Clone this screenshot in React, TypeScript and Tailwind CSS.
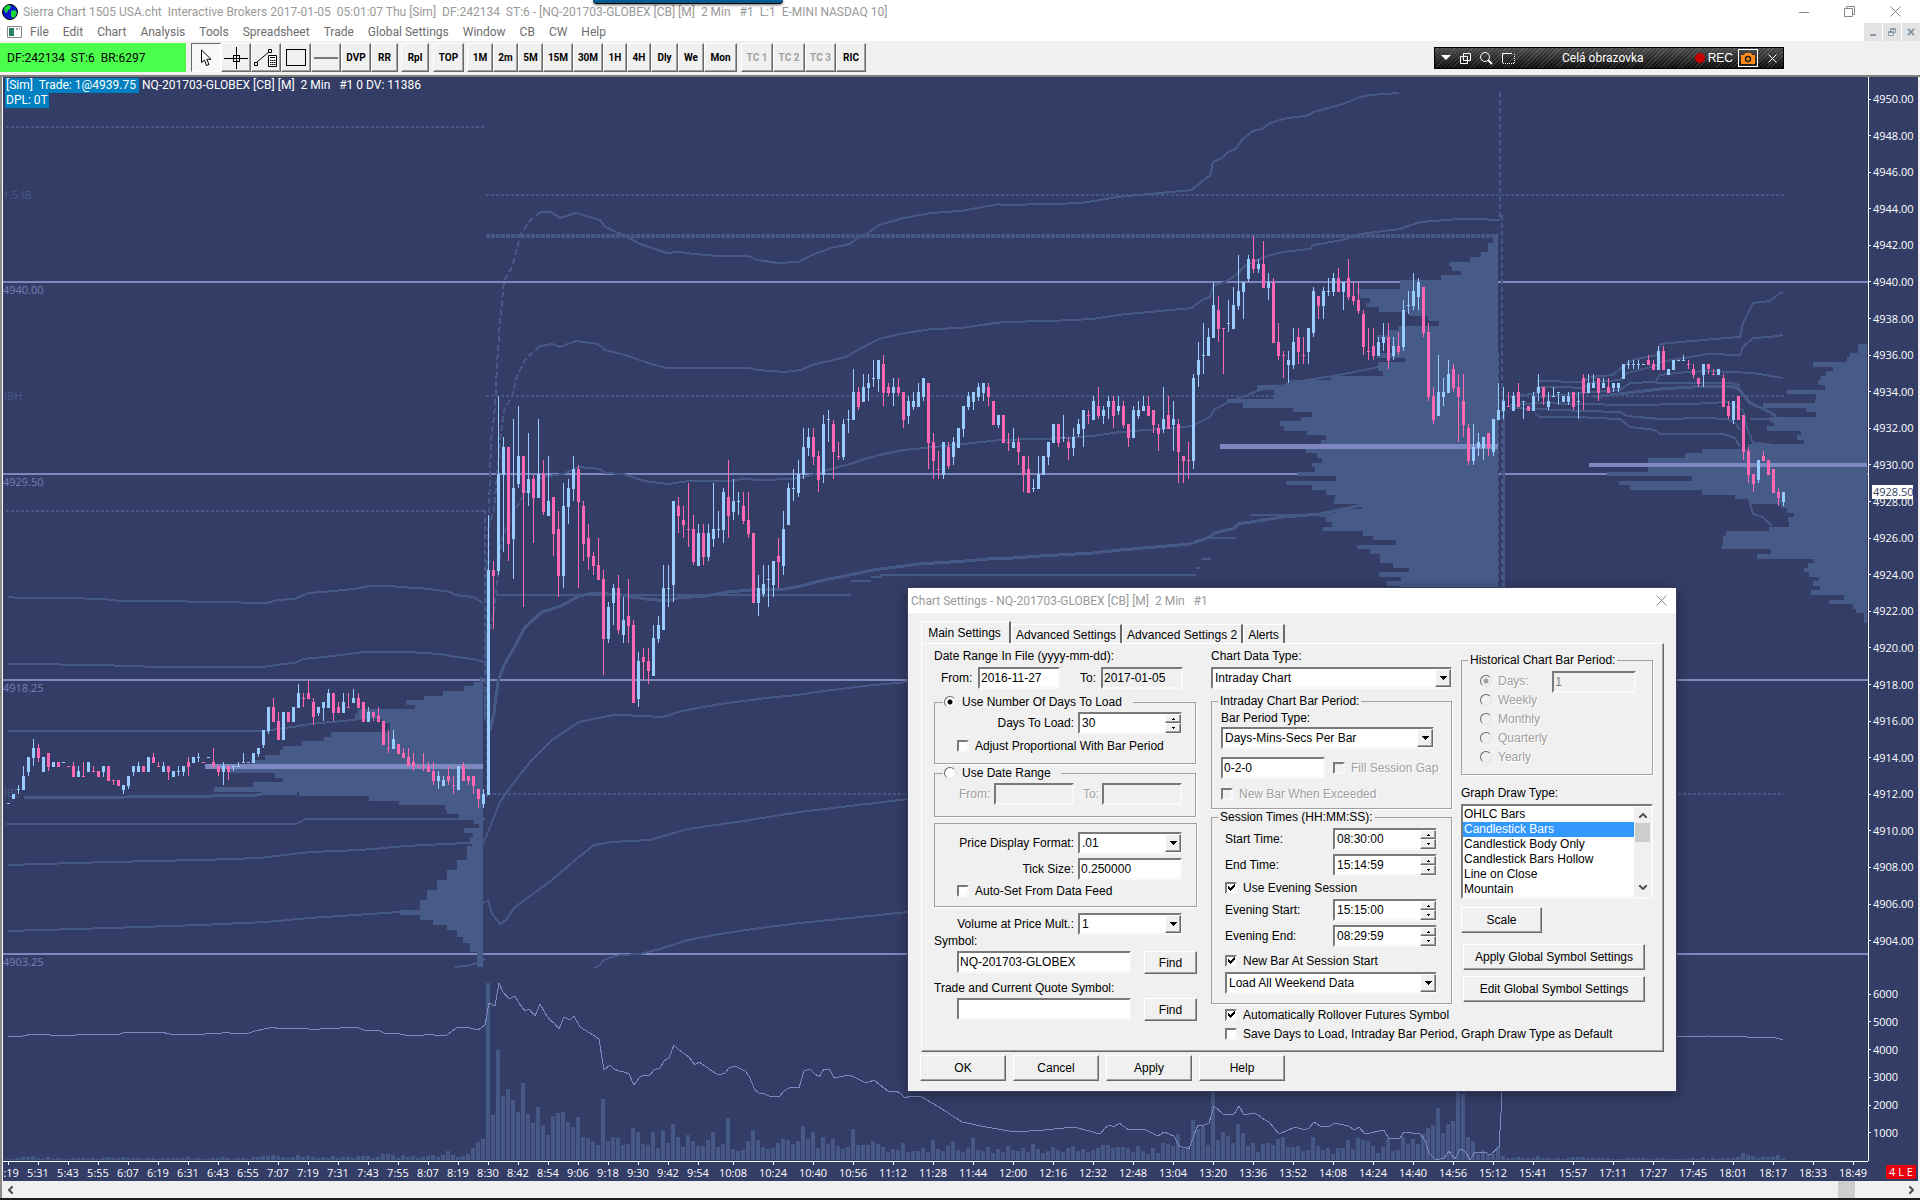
import React, { useId } from "react";

/* ---------- chart data ---------- */

// Every block keeps its own origin and zoom (units per pixel)
interface Frame {
  x: number;
  y: number;
  kx: number;
  ky: number;
}

const PAGE: Frame = { x: 0, y: 0, kx: 1, ky: 1 };
const PRE: Frame = { x: 0, y: 400, kx: 3, ky: 3 };
const OPEN: Frame = { x: 460, y: 200, kx: 2.6133, ky: 2.9037 };
const MID: Frame = { x: 1000, y: 80, kx: 3, ky: 3 };
const EVE: Frame = { x: 1460, y: 200, kx: 3, ky: 3 };
const VOL: Frame = { x: 0, y: 940, kx: 1.7043, ky: 3 };
const VOL2: Frame = { x: 1100, y: 1060, kx: 1.9122, ky: 3 };

// direction high top bottom low, trailing values may be left out
const CANDLES: { frame: Frame; start: number; rows: string }[] = [
  {
    frame: PRE,
    start: 0,
    rows: "u 1209,u 1182 1182 1197,u 1155 1167 1170 1182,u 1098 1128 1170,u 1071 1071 1116 1128,u 1017 1044 1074 1098,d 1032 1044 1074 1086,u 1071 1071 1116,d 1059 1059 1101 1113,u 1086 1086 1101,d 1086 1086 1101,u 1086,d 1098,d 1086 1098 1131,u 1098 1113 1131,d 1086 1128 1131,u 1086 1086 1116,d 1098 1113 1116,d 1113 1113 1131,u 1098 1098 1116 1131,d 1098 1098 1143,d 1140 1140 1143 1155,d 1140 1140 1158,u 1155 1155 1170 1182,u 1128 1128 1158 1167,u 1098 1098 1116 1128,u 1086 1098 1116,d 1098 1098 1116,u 1071 1071 1116,d 1059 1071 1089,d 1086 1098 1101,u 1086 1098 1116,d 1098 1098 1116 1140,u 1113 1113 1131,u 1098 1113 1116 1128,u 1098 1098 1116 1128,d 1071 1086 1101 1128,u 1071 1071 1089,u 1059 1071 1074 1086,d 1086,u 1071,d 1044 1086 1101,d 1098 1098 1116 1128,u 1086 1098 1116 1155,d 1098 1098 1116 1140,u 1098 1098 1101 1113,u 1086 1098 1101,u 1059 1086 1089,u 1086,u 1059 1059 1089,u 1044 1044 1062 1071,u 990 990 1035 1044,u 921 921 993 1002,d 894 921 966,d 936 963 1020,u 936 936 1020,d 936 936 966,u 921 921 966,u 852 879 924,d 879 894 897 921,d 840 879 897,d 894 906 951 975,u 921 921 939 948,u 906 906 924 963,u 867 879 924,d 879 879 939 963,d 906 921 939,u 879 906 939,d 879 921 924,u 867 894 909,d 879 894 924,d 906 906 966,u 921 936 966,d 936 936 951 963,d 921 948 966,d 963 963 1035,d 990 1044 1047 1059,u 990 1017 1047,d 1032 1032 1062,d 1044 1059 1074,d 1044 1071 1098,d 1059 1086 1101 1113,d 1098 1098 1101 1104,d 1059 1098 1101 1113,d 1086 1098 1116,d 1086 1113 1143 1155,u 1113 1128 1143 1167,u 1128 1140 1158,d 1098 1128 1143 1155,d 1128 1155 1158 1182,u 1098 1098 1170,d 1086 1098 1143,d 1128 1128 1143 1155,d 1128 1128 1158 1182,d 1167 1167 1197 1224,u 1167 1182 1212 1224",
  },
  {
    frame: OPEN,
    start: 96,
    rows: "u 914 1074 1728,d 1048 1074 1092 1246,u 569 795 1076 1088,u 688 717 798 1021,d 717 717 998 1048,u 636 836 984 1101,u 598 743 825 836,d 743 743 851 1182,u 677 810 851 888,d 798 810 865 996,u 636 795 865,d 755 795 906 914,u 743 874 917,d 862 862 970 1034,d 903 955 1092 1153,u 822 888 1092 1127,u 810 836 891 941,u 743 781 839 874,d 769 781 877 1127,d 874 888 998 1048,d 941 981 1037 1074,d 1022 1034 1063 1088,d 981 1060 1103,d 1074 1101 1275 1379,u 1166 1182 1275 1287,u 1115 1127 1170 1234,d 1088 1127 1249 1260,u 1153 1220 1263 1286,d 1101 1208 1237 1286,d 1220 1234 1461,u 1312 1339 1449 1472,d 1301 1327 1342 1393,d 1301 1339 1368 1405,u 1234 1272 1382,u 1208 1234 1275 1286,u 1060 1127 1249,u 1060 1127 1130 1182,u 874 874 1118 1167,d 862 888 918 967,d 888 929 944 981,d 822 955 958 1008,d 914 955 1051 1060,u 941 967 1063,d 941 967 1037 1060,u 941 967 1037 1048,u 822 955 984 1008,u 903 955 958 981,u 836 848 958 996,d 755 862 918 981,u 810 874 906 929,u 848 874 877 914,d 848 888 932 941,d 848 929 970 981,d 967 967 1170,u 1088 1127 1170 1208,u 1060 1115 1144 1153,u 1060 1101 1104 1182,u 1048 1048 1118 1153,d 981 1034 1051 1127,u 903 955 1063 1088,u 822 836 944,u 781 836 839 874,u 755 795 851 862,u 662 717 798 810,u 662 688 720 743,d 662 688 746 769,d 729 743 812 848,u 624 650 798 822,u 610 636 639 703,d 638 650 732 810,d 703 743 746 755,u 636 650 746 755,u 610 636 639 677,u 491 558 639,d 543 558 601 610,u 505 543 586,u 505 531 546 584,u 465 517 520 543,u 465 465 520 558,d 450 476 560 598,d 531 543 560 569,u 517 543 560 598,d 517 543 560 569,d 558 558 639 662,u 569 584 627 650,u 558 584 601 610,u 531 558 601,u 517 517 572 584,d 531 531 706 781,d 677 703 758 810,d 729 781 784 810,u 703 703 799 810,d 703 717 772 781,u 688 703 746 769,u 662 662 720,u 598 598 665 688,u 558 569 601 610,u 558 558 586 610,u 531 543 572 584,u 531 531 560 584,d 531 543 572 598,d 584 584 653,u 624 624 653 662",
  },
  {
    frame: MID,
    start: 199,
    rows: "d 1005 1005 1089,d 1059 1086 1089 1113,u 1044 1086 1104,d 1071 1086 1116 1155,d 1128 1128 1185 1236,d 1128 1167 1239,u 1197 1224 1227 1236,u 1128 1182 1227,u 1128 1128 1185,u 1086 1086 1131 1155,u 1032 1032 1089,d 1032 1032 1089 1101,u 1005 1071 1074 1086,d 1071 1086 1104 1140,u 1044 1071 1104 1128,u 1017 1032 1062 1071,u 990 990 1047 1101,d 990 1005 1008 1032,u 948 963 1020,d 921 978 1008 1017,u 978 990 1008 1032,u 948 963 981 1017,d 948 963 1008 1044,u 948 978 993 1005,d 963 978 1035 1044,d 1032 1032 1074 1101,u 978 990 1074,u 963 990 1008 1017,u 948 978 993,d 948 978 1008,d 990 990 1035 1059,d 1032 1044 1062 1113,u 921 1017 1047 1059,d 948 1005 1047,u 963 1017 1035 1113,d 1017 1032 1116 1209,d 1128 1128 1143 1209,d 1086 1140 1143 1197,u 882 894 1143 1167,u 786 840 885 921,u 729 825 828 882,u 744 771 828,u 606 675 774,d 648 690 747 786,d 744 744 747 882,u 660 729 732 756,u 621 675 747,u 525 633 678 690,u 606 606 636 717,u 525 537 597 606,d 468 537 567 579,u 537 552 567 579,d 483 552 624,u 579 606 624 660,d 594 606 789,d 729 786 828 840,d 813 825 828 894,u 813 840 855 909,u 744 786 855 867,d 744 771 816 852,d 771 825 828 852,u 744 744 816 852,u 621 633 759 771,d 648 648 678 717,u 621 633 678 717,u 594 633 636 648,u 579 594 636 648,d 564 594 636,u 606 606 636 690,d 537 594 651 660,d 606 648 663 675,d 606 660 693 702,d 690 702 801 825,d 744 813 816 840,d 744 798 828 840,u 771 786 828,u 729 771 789 813,d 729 771 843 867,u 771 798 828 840,d 756 798 816 825,u 660 690 801 813,u 633 675 678 702,u 579 633 678 690,u 594 606 651 690,d 621 621 759 771,d 729 756 951 963,d 921 948 1020 1032,u 825 936 1008,u 894 936 951 978,u 840 882 939,d 852 867 924 936,d 882 921 951 1086,d 882 963 1035 1071,d 1032 1044 1143 1155,u 1032 1101 1143 1155,u 1059 1086 1104 1128,u 1071 1071 1104 1140,d 1059 1059 1104 1128,u 1017 1017 1116 1128,u 909 990 1020,u 921 963 993 1017",
  },
  {
    frame: EVE,
    start: 300,
    rows: "d 576 618 621,u 576 588 633,d 549 576 621,u 603 603 606 657,d 618 618 633,u 576 588 633,u 522 561 579 603,d 561 561 591 615,u 576 603 621 630,u 561 588 591,u 576 576 579 615,u 588 588 606,u 576 588 606 615,d 576 576 621 630,u 576 603 606 657,d 522 534 579 630,u 522 549 579,u 522 549 564,d 534 534 579 603,u 534 549 564,d 534 561 579,u 549 549 564 576,u 549 549 564 576,u 492 492 537,u 480 492 495 507,u 480 492 495 507,u 480 492 495 507,u 492,d 465 480 495,d 480 492 510,u 438 453 510,d 438 453 510,u 507 507 525,u 480 480 510,u 480,u 465 480 483,d 480 492 495 507,d 492 507 525 534,d 534 534 552 561,u 492 492 525 561,d 492 492 507 522,d 507 522 525,u 507 507 525,d 522 534 621,d 603 618 648 657,u 603 603 660 672,d 588 588 660,d 645 645 756 780,d 741 753 825 849,d 822 822 852 876,u 780 780 840 849,d 753 768 783,d 780 780 825,d 807 807 879,d 864 876 894 918,u 876 876 906 918",
  },
];

// y:left steps, last value closes the shape
const PROFILES: { frame: Frame; right: number; steps: string; end: number }[] = [
  {
    frame: PRE,
    right: 1449,
    end: 1700,
    steps: "831:1440 846:1422 858:1392 873:1329 887:1272 900:1218 914:1245 927:1074 942:1066 955:1145 968:1169 996:993 1011:972 1023:906 1038:848 1050:840 1065:795 1079:753 1092:720 1106:690 1119:825 1134:848 1147:759 1161:642 1176:897 1188:1107 1203:1197 1215:1335 1230:1341 1242:1377 1255:1422 1271:1437 1284:1392 1299:1419 1312:1410 1326:1416 1338:1400 1380:1370 1410:1340 1440:1310 1470:1280 1500:1260 1530:1200 1545:1260 1560:1300 1575:1340 1590:1370 1610:1390 1630:1410 1655:1430",
  },
  {
    frame: MID,
    right: 1494,
    end: 1530,
    steps: "462:1485 475:1478 489:1464 516:1443 531:1410 546:1347 558:1356 573:1383 585:1323 600:1200 627:1071 642:1080 654:1110 669:1098 682:1137 695:1227 709:1284 723:1317 738:1194 751:1160 765:1131 778:1172 804:1185 819:1131 834:1215 846:1134 874:1149 888:993 900:866 914:771 930:822 957:681 970:729 984:879 996:936 1011:903 1023:840 1038:852 1053:921 1065:978 1080:963 1106:918 1119:951 1134:966 1149:936 1161:945 1175:891 1188:1008 1203:858 1215:936 1230:978 1245:1005 1257:1002 1272:1086 1287:1010 1299:957 1311:978 1326:996 1340:969 1353:1089 1368:1119 1380:1188 1395:1071 1407:1110 1422:1140 1449:1179 1464:1227 1476:1137 1491:1203 1503:1161 1518:1200",
  },
  {
    frame: EVE,
    right: 1221,
    end: 1269,
    steps: "432:1194 459:1170 471:1161 486:1059 500:1119 513:1098 528:1083 540:1074 555:1095 570:981 582:1068 597:1065 609:909 624:1038 636:1068 651:930 665:942 678:921 692:1023 706:1011 719:1032 732:864 747:726 759:675 774:564 816:441 828:696 843:477 855:510 870:726 885:825 897:867 911:963 925:981 938:1002 951:984 966:987 981:927 993:798 1008:789 1035:786 1047:933 1062:891 1077:1062 1089:1044 1104:1032 1116:1047 1131:1077 1144:1059 1158:1080 1171:1053 1185:1152 1200:1107 1212:1179 1227:1188 1240:1212",
  },
];

const BANDS: { frame: Frame; w?: number; dash?: boolean; pts: string }[] = [
  { frame: PRE, pts: "25,591 60,594 200,595 310,598 360,603 490,604 640,607 800,609 830,600 885,597 925,580 1000,572 1060,566 1110,558 1165,558 1290,567 1350,577 1365,584 1420,592 1450,609" },
  { frame: PRE, pts: "25,793 340,795 345,798 520,800 790,801 850,791 885,788 910,777 975,772 1095,756 1220,757 1320,762 1370,770 1420,776 1455,787" },
  { frame: PRE, pts: "25,993 800,993 830,987 880,981 930,972 1060,960 1090,955 1145,955" },
  { frame: PRE, w: 3, pts: "72,1195 380,1190 640,1187 770,1184 800,1180 890,1178" },
  { frame: PRE, pts: "18,1272 888,1272 918,1257 1456,1257" },
  { frame: PAGE, pts: "8,865 110,862 200,860 260,858 310,852 360,850 384,848 405,846 466,843 484,842 500,802 512,785 530,762 552,740" },
  { frame: PAGE, pts: "8,931 110,928 200,925 266,922 310,918 370,914 430,910 470,906 486,902" },
  { frame: PAGE, pts: "455,967 466,966 478,963 485,959" },
  { frame: PAGE, pts: "488,900 492,914 500,924 506,920 514,908 530,896 552,880 575,860 594,845 612,842 650,840 688,829 750,820 800,812 850,806 908,799" },
  { frame: PAGE, pts: "594,968 600,965 604,960 612,957 620,955 640,954 660,949 688,940 720,934 760,928 800,923 850,918 908,912" },
  { frame: OPEN, dash: true, pts: "66,1510 70,1160 74,1000 80,700 92,600 97,480 104,350 115,235 135,195 160,100 178,68 208,35" },
  { frame: OPEN, pts: "208,35 238,35 262,52 303,38 365,57 378,78 430,105 470,128 540,153 575,150 610,158 680,163 755,163 775,175 830,184 885,180 920,160 970,140 1020,128 1035,112 1065,97 1095,72 1160,52 1230,37 1310,31 1380,18 1411,13" },
  { frame: OPEN, dash: true, pts: "70,1400 76,950 90,900 105,700 115,610 135,570 150,510 170,465 208,425" },
  { frame: OPEN, pts: "208,425 240,417 262,428 303,408 360,418 378,435 430,450 500,475 540,488 755,487 775,494 850,500 890,494 920,478 1010,455 1030,440 1095,405 1150,388 1230,376 1310,371 1400,357 1411,356" },
  { frame: OPEN, dash: true, pts: "78,1250 88,1200 100,1080 110,980 130,930 150,890 170,850 200,810" },
  { frame: OPEN, pts: "200,810 230,800 270,797 310,775 365,780 378,793 425,797 480,815 540,824 600,817 700,816 740,810 790,813 870,811 910,800 960,783 1020,768 1050,756 1095,740 1160,727 1290,712 1411,697" },
  { frame: OPEN, w: 3, pts: "78,1540 90,1490 100,1400 115,1350 140,1300 170,1240 213,1197 265,1180 310,1150 350,1140 420,1146 485,1158 540,1163 570,1155 640,1149 700,1137 760,1133 850,1130 890,1122 950,1102 1020,1090 1080,1074 1200,1057 1320,1049 1411,1039" },
  { frame: OPEN, pts: "95,1146 1022,1146" },
  { frame: OPEN, pts: "1022,1106 1074,1106" },
  { frame: OPEN, pts: "1074,1095 1100,1095 1100,1088 1411,1088" },
  { frame: OPEN, pts: "240,1568 310,1515 400,1496 420,1495 530,1500 580,1485 680,1463 800,1447 880,1438 950,1425 1080,1408 1170,1399" },
  { frame: MID, pts: "0,375 160,373 240,368 300,361 350,350 480,338 575,329 610,300 630,288 640,245 665,235 685,215 705,207 730,178 760,152 785,147 810,130 850,118 930,106 940,95 1020,75 1080,50 1110,44 1196,38" },
  { frame: MID, pts: "0,726 150,723 280,716 350,704 480,692 575,683 605,660 630,650 640,618 680,602 710,582 735,557 760,545 800,528 850,515 930,506 940,495 1030,480 1080,462 1200,446 1260,425 1380,416 1430,417 1500,421" },
  { frame: MID, pts: "0,1080 120,1077 200,1075 280,1067 360,1056 480,1046 575,1038 630,1011 645,988 680,970 740,945 780,930 830,920 880,906 980,890 1080,872 1135,862" },
  { frame: MID, w: 3, pts: "0,1436 120,1427 280,1418 360,1409 570,1392 630,1370 645,1358 705,1345 715,1332 770,1324 850,1312 960,1303 1030,1288 1085,1276" },
  { frame: MID, pts: "0,1485 588,1485" },
  { frame: MID, pts: "588,1464 603,1464" },
  { frame: MID, pts: "603,1437 633,1437" },
  { frame: MID, pts: "633,1374 708,1374" },
  { frame: MID, pts: "753,1305 1000,1305" },
  { frame: EVE, pts: "150,590 230,580 235,543 370,546 390,530 460,525 485,500 520,480 590,465 600,432 660,426 800,415 840,410 850,370 880,310 930,303 960,280 970,279" },
  { frame: EVE, pts: "225,590 240,560 300,560 370,563 400,545 480,540 500,520 585,498 600,485 690,470 745,462 840,465 850,440 880,415 930,412 970,405" },
  { frame: EVE, pts: "240,590 370,578 480,570 510,550 585,545 600,525 680,517 750,512 880,520 970,534" },
  { frame: EVE, pts: "588,549 810,549 840,555" },
  { frame: EVE, w: 3, pts: "400,590 500,578 600,568 700,562 800,558 835,565 870,610 930,635 950,650" },
  { frame: EVE, pts: "150,615 240,609 500,614 700,612 800,605 850,630 860,680 880,728 930,731" },
  { frame: EVE, pts: "150,625 370,632 480,636 500,648 600,658 740,655 800,657 825,670 840,690" },
  { frame: EVE, pts: "225,640 240,650 370,650 400,655 480,657 510,682 585,690 600,703 790,703 825,714 840,740" },
  { frame: EVE, pts: "867,897 880,943 910,950 935,978" },
  { frame: EVE, pts: "870,657 940,657" },
];

const VOLUME_LINES: { frame: Frame; pts: string }[] = [
  { frame: VOL, pts: "14,289 30,292 40,289 55,283 75,283 85,286 130,286 140,283 150,286 158,283 165,286 180,283 205,283 215,277 275,277 290,283 350,283 360,280 375,283 382,277 392,280 425,280 435,274 450,268 467,262 476,268 485,265 493,268 507,265 520,265 527,268 545,268 560,265 570,268 580,265 595,262 607,262 620,271 645,271 655,280 665,283 673,280 690,286 722,286 732,283 740,286 762,286 778,265 787,262 795,262 815,271 826,256 834,190 843,199 851,130 858,155 868,178 877,169 885,190 894,212 902,208 911,227 920,193 928,220 937,240 944,248 953,268 962,230 971,241 979,227 988,260 1005,280 1021,297 1030,391 1039,376 1047,388 1055,394 1064,397 1072,403 1081,436 1090,412 1098,406 1106,409 1115,391 1124,385 1132,362 1141,355 1149,314 1158,330 1175,350 1184,374 1192,367 1218,400 1226,406 1235,400 1243,385 1252,379 1260,385 1269,394 1277,409 1286,451 1294,460 1303,463 1311,469 1320,469 1328,472 1337,454 1345,445 1354,442 1362,445 1371,394 1380,388 1388,400 1396,412 1405,388 1414,391 1422,415 1439,409 1447,406 1456,412 1472,427 1481,427 1489,421 1500,436 1506,445 1514,454 1525,454 1534,460 1542,475 1551,469 1568,467 1600,500 1640,545 1680,560 1730,575 1780,570 1830,560 1874,582" },
  { frame: VOL2, pts: "0,222 10,204 20,195 27,201 36,189 55,210 85,208 110,227 123,217 142,228 152,258 170,267 180,225 188,196 196,199 208,190 218,139 235,163 257,163 266,139 275,166 294,160 303,165 315,180 324,185 342,222 373,202 392,210 400,204 409,187 421,199 440,197 449,190 475,199 487,210 495,201 506,222 543,210 553,237 573,235 582,217 612,222 621,240 630,279 640,298 650,298 658,294 668,274 679,297 688,268 698,273 707,300 717,277 737,277 745,286 763,260 767,160 769,60" },
  { frame: EVE, pts: "648,2511 740,2508 860,2511 940,2511 970,2520" },
];

const VOLUME =
  "1 1 2 3 3 4 2 1 3 1 2 1 1 2 2 2 1 2 1 2 3 2 2 3 2 2 2 1 2 2 1 2 2 2 2 2 3 1 2 1 1 2 2 3 2 1 2 2 1 3 3 4 4 5 4 3 2 3 5 3 4 3 2 3 2 4 2 3 3 2 4 4 4 2 3 6 6 5 2 5 3 4 2 3 4 5 3 5 9 5 3 4 6 12 18 21 " +
  "177 45 110 64 71 60 48 77 46 37 53 35 25 44 47 48 38 33 43 23 22 19 15 61 19 23 22 15 16 32 28 16 15 28 12 30 17 36 23 13 25 19 14 14 20 28 13 16 42 11 9 10 19 30 20 13 11 12 17 21 20 16 19 34 21 28 12 23 16 21 14 11 13 31 15 15 15 19 16 13 8 11 10 17 8 9 " +
  "9 12 8 20 11 9 14 18 10 8 12 22 10 9 13 7 11 8 14 10 9 12 8 16 11 7 9 13 10 8 12 14 9 11 8 10 12 15 15 12 13 13 12 8 14 9 6 12 7 17 16 14 26 11 14 40 31 34 15 72 20 28 24 17 36 27 14 17 8 16 17 15 21 23 13 13 14 9 10 23 14 10 12 6 12 12 20 11 22 20 19 14 7 13 21 9 10 23 16 21 16 26 32 35 52 27 36 39 70 66 23 19 6 10 6 6 14 " +
  "4 2 2 3 2 2 2 4 2 2 1 2 1 2 3 3 3 2 2 2 2 2 1 1 1 2 2 2 2 1 1 2 2 1 1 1 1 1 2 1 3 1 2 1 2 2 2 3 7 5 4 2 3 3 3 5 2";

const TIMES_A = "5:19 5:31 5:43 5:55 6:07 6:19 6:31 6:43 6:55 7:07 7:19 7:31 7:43 7:55 8:07 8:19 8:30 8:42 8:54 9:06 9:18 9:30 9:42 9:54".split(" ");
const TIMES_B = "10:08 10:24 10:40 10:56 11:12 11:28 11:44 12:00 12:16 12:32 12:48 13:04 13:20 13:36 13:52 14:08 14:24 14:40 14:56 15:12 15:41 15:57 17:11 17:27 17:45 18:01 18:17 18:33 18:49".split(" ");
const PRICES = Array.from({ length: 24 }, (_, i) => (4950 - i * 2).toFixed(2));

const LEVELS = [
  { y: 281, label: "4940.00" },
  { y: 473, label: "4929.50" },
  { y: 679, label: "4918.25" },
  { y: 953, label: "4903.25" },
];

const barX = (i: number) => 8 + i * 5;

function toPoints(f: Frame, pts: string) {
  return pts
    .split(" ")
    .map((p) => {
      const [x, y] = p.split(",").map(Number);
      return `${Math.round(f.x + x / f.kx)},${Math.round(f.y + y / f.ky)}`;
    })
    .join(" ");
}

function Candles() {
  return (
    <g>
      {CANDLES.map(({ frame, start, rows }) =>
        rows.split(",").map((row, n) => {
          const [dir, ...raw] = row.split(" ");
          const v = raw.map(Number);
          const high = v[0];
          const top = v[1] ?? high;
          const bottom = v[2] ?? top + 3;
          const low = v[3] ?? bottom;
          const y = (q: number) => Math.round(frame.y + q / frame.ky);
          const x = barX(start + n);
          return (
            <g key={x} fill={dir === "u" ? "#99ccff" : "#ff69b4"}>
              <rect x={x} y={y(high)} width={1} height={Math.max(1, y(low) - y(high))} />
              <rect x={x - 1} y={y(top)} width={3} height={Math.max(1, y(bottom) - y(top))} />
            </g>
          );
        })
      )}
    </g>
  );
}

function Profile({ frame, right, steps, end }: (typeof PROFILES)[number]) {
  const rows = steps.split(" ").map((s) => s.split(":").map(Number));
  const px = (x: number) => Math.round(frame.x + x / frame.kx);
  const py = (y: number) => Math.round(frame.y + y / frame.ky);
  let d = `M${px(right)} ${py(rows[0][0])}`;
  rows.forEach(([y, left], i) => {
    d += `V${py(y)}H${px(left)}V${py(rows[i + 1]?.[0] ?? end)}`;
  });
  return <path d={`${d}H${px(right)}Z`} fill="#475b88" />;
}

function Plot() {
  return (
    <svg
      viewBox="3 77 1865 1084"
      preserveAspectRatio="none"
      className="absolute inset-0 h-full w-full"
      shapeRendering="crispEdges"
      fontFamily="'Open Sans', 'Noto Sans', sans-serif"
      fontSize="11"
    >
      {LEVELS.map((l) => (
        <g key={l.label}>
          <rect x={3} y={l.y} width={1865} height={2} fill="#7d88c0" />
          <text x={3} y={l.y + 13} fill="#7480b8">{l.label}</text>
        </g>
      ))}
      <g fill="#475b88">
        <text x={3} y={199}>1.5 IB</text>
        <text x={4} y={400}>IBH</text>
        <text x={4} y={797}>IBL</text>
      </g>
      <g stroke="#465986" fill="none" strokeWidth={2} strokeDasharray="3 2">
        <path d="M6 127H485M6 511H485M486 195H1784M486 396H1784M488 794H1784" />
        <path d="M486 236H1498" strokeWidth={4} strokeDasharray="4 1" />
        <path d="M1500 92V220M1502 215V587M1498 353V587" strokeDasharray="5 3" />
        <path d="M1504 400V587" strokeDasharray="none" />
        <path d="M487 560V800M485 510V720" strokeDasharray="5 3" />
      </g>
      {PROFILES.map((p) => (
        <Profile key={p.right} {...p} />
      ))}
      <g stroke="#465986" fill="none">
        {BANDS.map((b, i) => (
          <polyline key={i} points={toPoints(b.frame, b.pts)} strokeWidth={b.w ?? 2} strokeDasharray={b.dash ? "6 3" : undefined} />
        ))}
      </g>
      <g fill="#7d88c0">
        <rect x={205} y={764} width={278} height={5} />
        <rect x={1220} y={444} width={278} height={5} />
        <rect x={1589} y={463} width={278} height={4} />
      </g>
      <g fill="#465986">
        {VOLUME.split(" ").map((h, i) => (
          <rect key={i} x={barX(i) - 2} y={1160 - Number(h)} width={4} height={Number(h)} />
        ))}
      </g>
      <g stroke="#7d88c0" fill="none" strokeWidth={1}>
        {VOLUME_LINES.map((l, i) => (
          <polyline key={i} points={toPoints(l.frame, l.pts)} />
        ))}
      </g>
      <Candles />
    </svg>
  );
}

/* ---------- dialog controls ---------- */

const sunken = "border-2 border-t-[#7a7a7a] border-l-[#7a7a7a] border-r-[#f8f8f8] border-b-[#f8f8f8]";
const raised = "border border-t-white border-l-white border-r-[#696969] border-b-[#696969] shadow-[inset_-1px_-1px_0_#a0a0a0] bg-[#f0f0f0]";
const dim = "text-[#a0a0a0] [text-shadow:1px_1px_0_#fff]";

function TextBox({ label, value, className, disabled }: { label: string; value: string; className: string; disabled?: boolean }) {
  return (
    <input
      aria-label={label}
      defaultValue={value}
      disabled={disabled}
      className={`h-[22px] min-w-0 shrink-0 px-[1px] ${sunken} ${disabled ? "bg-[#f0f0f0] text-[#808080]" : ""} ${className}`}
    />
  );
}

function Spin({ label, value }: { label: string; value: string }) {
  return (
    <span className="relative flex h-[22px] w-[104px] shrink-0">
      <input aria-label={label} defaultValue={value} className={`w-full bg-white px-[2px] ${sunken}`} />
      <span className="absolute top-[2px] right-[1px] flex w-4 flex-col">
        <button aria-label={`${label} up`} className={`flex h-[9px] items-center justify-center ${raised}`}>
          <svg width="3" height="2" shapeRendering="crispEdges"><path d="M1 0h1v1h1v1H0V1h1z" /></svg>
        </button>
        <button aria-label={`${label} down`} className={`flex h-[10px] items-center justify-center ${raised}`}>
          <svg width="3" height="2" shapeRendering="crispEdges"><path d="M0 0h3v1H2v1H1V1H0z" /></svg>
        </button>
      </span>
    </span>
  );
}

function Drop({ label, value, className }: { label: string; value: string; className: string }) {
  return (
    <span className={`relative flex h-[22px] shrink-0 ${className}`}>
      <select aria-label={label} className={`w-full appearance-none bg-white px-[2px] ${sunken}`}>
        <option>{value}</option>
      </select>
      <span className={`pointer-events-none absolute top-[2px] right-[1px] flex h-[18px] w-4 items-center justify-center ${raised}`}>
        <svg width="7" height="4" shapeRendering="crispEdges"><path d="M0 0h7v1H6v1H5v1H4v1H3V3H2V2H1V1H0z" /></svg>
      </span>
    </span>
  );
}

function Check({ text, checked, disabled }: { text: string; checked?: boolean; disabled?: boolean }) {
  const id = useId();
  return (
    <span className="flex items-center gap-[6px]">
      <span className="relative flex">
        <input id={id} type="checkbox" defaultChecked={checked} disabled={disabled} className={`peer h-3 w-3 appearance-none ${sunken} ${disabled ? "bg-[#f0f0f0]" : "bg-white"}`} />
        <svg viewBox="0 0 7 7" className="pointer-events-none absolute top-[2px] left-[3px] hidden h-[7px] w-[7px] peer-checked:block" shapeRendering="crispEdges">
          <path d="M0 2h1v1h1v1h1V3h1V2h1V1h1V0h1v3H6v1H5v1H4v1H3v1H2V6H1V5H0z" />
        </svg>
      </span>
      <label htmlFor={id} className={`whitespace-nowrap ${disabled ? dim : ""}`}>{text}</label>
    </span>
  );
}

function Radio({ text, name, checked, disabled }: { text: string; name: string; checked?: boolean; disabled?: boolean }) {
  const id = useId();
  return (
    <span className="flex items-center gap-[6px]">
      <input
        id={id}
        type="radio"
        name={name}
        defaultChecked={checked}
        disabled={disabled}
        className={`h-3 w-3 appearance-none rounded-full border border-t-[#696969] border-l-[#696969] border-r-[#e3e3e3] border-b-[#e3e3e3] ${
          disabled
            ? "bg-[#f0f0f0] checked:bg-[radial-gradient(circle,#a0a0a0_2px,#f0f0f0_3px)]"
            : "bg-white checked:bg-[radial-gradient(circle,#000_2px,#fff_3px)]"
        }`}
      />
      <label htmlFor={id} className={`whitespace-nowrap ${disabled ? dim : ""}`}>{text}</label>
    </span>
  );
}

function Push({ children, className }: { children: React.ReactNode; className: string }) {
  return <button className={`shrink-0 ${raised} ${className}`}>{children}</button>;
}

function Group({ legend, legendClass, className, children }: { legend: React.ReactNode; legendClass?: string; className: string; children: React.ReactNode }) {
  return (
    <fieldset className={`min-w-0 border border-[#a0a0a0] shadow-[1px_1px_0_#fff] ${className}`}>
      <legend className={`flex h-[14px] items-center ${legendClass ?? "ml-[6px] px-[2px]"}`}>{legend}</legend>
      {children}
    </fieldset>
  );
}

const DRAW_TYPES = ["OHLC Bars", "Candlestick Bars", "Candlestick Body Only", "Candlestick Bars Hollow", "Line on Close", "Mountain"];

function SettingsDialog() {
  return (
    <div role="dialog" aria-label="Chart Settings" className="absolute top-[588px] left-[908px] w-[768px] bg-[#f0f0f0] pb-[10px] font-['Liberation_Sans',Arial,sans-serif] text-[12px] leading-[14px] text-black shadow-[0_0_0_1px_#3a4166,0_3px_12px_rgba(0,0,0,0.45)]">
      <div className="flex h-[25px] items-center justify-between bg-white px-[3px] font-['Roboto',sans-serif] text-[#999]">
        <span className="whitespace-pre">{"Chart Settings - NQ-201703-GLOBEX [CB] [M]  2 Min   #1"}</span>
        <button aria-label="Close" className="mr-[6px]">
          <svg width="11" height="11" stroke="#8a8a8a" fill="none"><path d="M.5.5l10 10M10.5.5l-10 10" /></svg>
        </button>
      </div>

      <div role="tablist" className="flex h-[30px] items-end pl-[13px]">
        <button role="tab" aria-selected className="h-[22px] w-[90px] border-t border-l border-t-white border-l-white border-r-2 border-r-[#696969] pr-[2px]">Main Settings</button>
        {["Advanced Settings", "Advanced Settings 2", "Alerts"].map((t) => (
          <button role="tab" key={t} className="h-[19px] border-t border-l border-t-white border-l-white border-r-2 border-r-[#696969] px-[4px] pt-[1px] whitespace-nowrap">{t}</button>
        ))}
      </div>

      <div className="mr-3 ml-[13px] flex h-[409px] items-start border border-t-white border-l-white border-r-[#696969] border-b-[#696969] pt-[5px] pl-3 shadow-[inset_-1px_-1px_0_#a0a0a0]">
        <div className="w-[263px]">
          <div>Date Range In File (yyyy-mm-dd):</div>
          <div className="mt-[4px] flex items-center pl-[7px]">
            <span className="w-[37px]">From:</span>
            <TextBox label="File from" value="2016-11-27" className="w-[82px] bg-white" />
            <span className="ml-5 w-[21px]">To:</span>
            <TextBox label="File to" value="2017-01-05" className="w-[82px] bg-[#f0f0f0]" />
          </div>
          <Group className="mt-[6px] h-[69px] w-[262px]" legendClass="ml-[8px] w-[190px] pl-[1px]" legend={<Radio name="range" text="Use Number Of Days To Load" checked />}>
            <div className="mt-[3px] flex items-center justify-end gap-[4px] pr-[13px]">
              <span>Days To Load:</span>
              <Spin label="Days To Load" value="30" />
            </div>
            <div className="mt-[5px] pl-[22px]"><Check text="Adjust Proportional With Bar Period" /></div>
          </Group>
          <Group className="mt-[2px] h-[51px] w-[262px]" legendClass="ml-[8px] w-[118px] pl-[1px]" legend={<Radio name="range" text="Use Date Range" />}>
            <div className="mt-[3px] flex items-center pl-[24px]">
              <span className={`w-[35px] ${dim}`}>From:</span>
              <TextBox label="Range from" value="" disabled className="w-[80px]" />
              <span className={`ml-[9px] w-[19px] ${dim}`}>To:</span>
              <TextBox label="Range to" value="" disabled className="w-[80px]" />
            </div>
          </Group>
          <div className="mt-[6px] h-[84px] w-[263px] border border-[#a0a0a0] pt-2 shadow-[1px_1px_0_#fff]">
            <div className="flex items-center justify-end gap-[4px] pr-[14px]">
              <span>Price Display Format:</span>
              <Drop label="Price Display Format" value=".01" className="w-[104px]" />
            </div>
            <div className="mt-[4px] flex items-center justify-end gap-[4px] pr-[14px]">
              <span>Tick Size:</span>
              <TextBox label="Tick Size" value="0.250000" className="w-[104px] bg-white" />
            </div>
            <div className="mt-[4px] pl-[22px]"><Check text="Auto-Set From Data Feed" /></div>
          </div>
          <div className="mt-[6px] flex items-center justify-end gap-[4px] pr-[15px]">
            <span>Volume at Price Mult.:</span>
            <Drop label="Volume at Price Mult." value="1" className="w-[104px]" />
          </div>
          <div className="-mt-[1px]">Symbol:</div>
          <div className="mt-[3px] flex justify-between pl-[23px]">
            <TextBox label="Symbol" value="NQ-201703-GLOBEX" className="w-[174px] bg-white" />
            <Push className="h-[23px] w-[53px]">Find</Push>
          </div>
          <div className="mt-[7px]">Trade and Current Quote Symbol:</div>
          <div className="mt-[3px] flex justify-between pl-[23px]">
            <TextBox label="Trade and Current Quote Symbol" value="" className="w-[174px] bg-white" />
            <Push className="h-[23px] w-[53px]">Find</Push>
          </div>
        </div>

        <div className="ml-[14px] w-[241px]">
          <div>Chart Data Type:</div>
          <Drop label="Chart Data Type" value="Intraday Chart" className="mt-[4px] w-[241px]" />
          <Group className="mt-[5px] h-[115px] pl-[9px]" legendClass="-ml-[3px] px-[2px]" legend="Intraday Chart Bar Period:">
            <div className="mt-[3px]">Bar Period Type:</div>
            <Drop label="Bar Period Type" value="Days-Mins-Secs Per Bar" className="mt-[2px] w-[213px]" />
            <div className="mt-[8px] flex items-center gap-2">
              <TextBox label="Bar period" value="0-2-0" className="w-[104px] bg-white" />
              <Check text="Fill Session Gap" disabled />
            </div>
            <div className="mt-[8px]"><Check text="New Bar When Exceeded" disabled /></div>
          </Group>
          <Group className="mt-[1px] h-[194px] pr-[14px] pl-[13px]" legendClass="-ml-[7px] px-[2px]" legend="Session Times (HH:MM:SS):">
            <div className="mt-[4px] flex items-center justify-between"><span>Start Time:</span><Spin label="Start Time" value="08:30:00" /></div>
            <div className="mt-[4px] flex items-center justify-between"><span>End Time:</span><Spin label="End Time" value="15:14:59" /></div>
            <div className="mt-[5px]"><Check text="Use Evening Session" checked /></div>
            <div className="mt-[4px] flex items-center justify-between"><span>Evening Start:</span><Spin label="Evening Start" value="15:15:00" /></div>
            <div className="mt-[4px] flex items-center justify-between"><span>Evening End:</span><Spin label="Evening End" value="08:29:59" /></div>
            <div className="mt-[7px]"><Check text="New Bar At Session Start" checked /></div>
            <Drop label="Weekend data" value="Load All Weekend Data" className="mt-[4px] w-[212px]" />
          </Group>
          <div className="mt-[4px] pl-[14px]"><Check text="Automatically Rollover Futures Symbol" checked /></div>
          <div className="mt-[5px] pl-[14px]"><Check text="Save Days to Load, Intraday Bar Period, Graph Draw Type as Default" /></div>
        </div>

        <div className="ml-[9px] w-[192px] pt-[4px]">
          <Group className="h-[122px]" legend="Historical Chart Bar Period:">
            <div className="flex items-start pt-[4px] pl-[18px]">
              <div className="flex flex-col gap-[5px] pt-[3px]">
                {["Days:", "Weekly", "Monthly", "Quarterly", "Yearly"].map((t) => (
                  <Radio key={t} name="period" text={t} checked={t === "Days:"} disabled />
                ))}
              </div>
              <TextBox label="Days" value="1" disabled className="ml-[5px] w-[84px]" />
            </div>
          </Group>
          <div className="mt-[11px]">Graph Draw Type:</div>
          <div className={`mt-[4px] flex h-[95px] bg-white pt-[1px] ${sunken}`}>
            <ul role="listbox" aria-label="Graph Draw Type" className="flex-1 leading-[15px]">
              {DRAW_TYPES.map((t) => (
                <li key={t} role="option" aria-selected={t === "Candlestick Bars"} className={`px-[1px] ${t === "Candlestick Bars" ? "bg-[#3399ff] text-white" : ""}`}>{t}</li>
              ))}
            </ul>
            <div className="flex w-[17px] flex-col items-center bg-[#f0f0f0] pt-[6px] pb-[7px]">
              <svg width="8" height="5" fill="none" stroke="#505050" strokeWidth="2"><path d="M0 5l4-4 4 4" /></svg>
              <span className="mt-[5px] h-[19px] w-[15px] bg-[#cdcdcd]" />
              <svg className="mt-auto" width="8" height="5" fill="none" stroke="#505050" strokeWidth="2"><path d="M0 0l4 4 4-4" /></svg>
            </div>
          </div>
          <Push className="mt-[8px] block h-[26px] w-[81px]">Scale</Push>
          <Push className="mt-[11px] ml-[2px] block h-[26px] w-[182px]">Apply Global Symbol Settings</Push>
          <Push className="mt-[6px] ml-[2px] block h-[26px] w-[182px]">Edit Global Symbol Settings</Push>
        </div>
      </div>

      <div className="mt-[3px] flex gap-[7px] pl-3">
        {["OK", "Cancel", "Apply", "Help"].map((t) => (
          <Push key={t} className="h-[26px] w-[86px]">{t}</Push>
        ))}
      </div>
    </div>
  );
}

/* ---------- window chrome ---------- */

function TitleBar() {
  return (
    <div className="relative flex h-[22px] items-center bg-white pt-[1px] pl-[2px] font-['Roboto',sans-serif] text-[12px] text-[#999]">
      <svg width="16" height="16" viewBox="0 0 16 16">
        <circle cx="8" cy="8" r="7.5" fill="#0a18c8" stroke="#000" />
        <path d="M3 3l3-2 3 1-1 3-2 1-1 3-2-1-1-3zM9 7l4-1 2 3-2 4-3 1-1-3z" fill="#18d838" />
      </svg>
      <span className="ml-[5px] whitespace-pre">{"Sierra Chart 1505 USA.cht  Interactive Brokers 2017-01-05  05:01:07 Thu [Sim]  DF:242134  ST:6 - [NQ-201703-GLOBEX [CB] [M]  2 Min   #1  L:1  E-MINI NASDAQ 10]"}</span>
      <div className="absolute top-0 left-[593px] h-[4px] w-[190px] rounded-b border-b border-black bg-[#005a94] shadow-[0_1px_3px_rgba(0,0,0,0.6)]" />
      <div className="mr-[19px] ml-auto flex items-center gap-[35px]">
        <button aria-label="Minimize"><svg width="10" height="10"><path d="M0 5.5h10" stroke="#8a8a8a" /></svg></button>
        <button aria-label="Restore"><svg width="11" height="11" fill="none" stroke="#8a8a8a"><path d="M.5 2.5h8v8h-8zM2.500 2.500v-2h8v8h-2" /></svg></button>
        <button aria-label="Close"><svg width="11" height="11" fill="none" stroke="#8a8a8a"><path d="M.5.5l10 10M10.5.5l-10 10" /></svg></button>
      </div>
    </div>
  );
}

function MenuBar() {
  return (
    <div className="flex h-[19px] items-center bg-white pt-[1px] pl-[7px] font-['Roboto',sans-serif] text-[12px] text-[#6d6d6d]">
      <svg width="15" height="12" viewBox="0 0 15 12">
        <path d="M.5.5h14v11H.5z" fill="#fff" stroke="#888" />
        <path d="M2 2h5v8H2z" fill="#2e7d6b" />
        <path d="M9 3h2M12 3h1" stroke="#555" />
      </svg>
      <nav className="ml-[8px] flex gap-[14px]">
        {["File", "Edit", "Chart", "Analysis", "Tools", "Spreadsheet", "Trade", "Global Settings", "Window", "CB", "CW", "Help"].map((m) => (
          <button key={m}>{m}</button>
        ))}
      </nav>
      <div className="ml-auto flex gap-[1px] self-end">
        <button aria-label="Minimize chart" className="flex h-[18px] w-[18px] items-center justify-center bg-[#e3e3e3]"><svg width="8" height="8"><path d="M1 7h6" stroke="#8a9bab" strokeWidth="2" /></svg></button>
        <button aria-label="Restore chart" className="flex h-[18px] w-[18px] items-center justify-center bg-[#e3e3e3]"><svg width="9" height="9" fill="none" stroke="#8a9bab"><path d="M.5 3.500h5v4h-5zM.5 4.500h5M2.500 3v-2.500h5v4h-2M2.500 1.500h5" /></svg></button>
        <button aria-label="Close chart" className="flex h-[18px] w-[18px] items-center justify-center bg-[#e3e3e3]"><svg width="8" height="8"><path d="M1 1l6 6M7 1L1 7" stroke="#8a9bab" strokeWidth="2" /></svg></button>
      </div>
    </div>
  );
}

const toolBtn = "h-[29px] flex items-center justify-center border border-t-white border-l-white border-r-[#696969] border-b-[#696969] shadow-[inset_-1px_-1px_0_#a0a0a0] font-['Roboto',sans-serif] text-[10px] font-bold";

function Toolbar() {
  return (
    <div className="flex h-[34px] items-start bg-[#f0f0f0] pt-[2px] text-black">
      <div className="flex h-[29px] w-[186px] items-center bg-[#4dff4d] pl-[7px] font-['Roboto',sans-serif] text-[12px] whitespace-pre">{"DF:242134  ST:6  BR:6297"}</div>
      <div className="ml-[5px] flex">
        <button aria-label="Pointer" className="flex h-[29px] w-[30px] items-center justify-center border border-t-[#696969] border-l-[#696969] border-r-white border-b-white bg-[#f8f8f8]">
          <svg width="12" height="18" viewBox="0 0 12 18" fill="#fff" stroke="#000"><path d="M1.500 1v12.500l3-2.500 2 5.500 2.500-1-2.200-5.200H11z" /></svg>
        </button>
        <button aria-label="Crosshair" className={`w-[30px] ${toolBtn}`}>
          <svg width="24" height="22" fill="none" stroke="#000" shapeRendering="crispEdges"><path d="M0 11.500h24M12.500 0v22M9.500 8.500h6v6h-6z" /></svg>
        </button>
        <button aria-label="Calculator line" className={`w-[30px] ${toolBtn}`}>
          <svg width="26" height="20" fill="none" stroke="#000"><path d="M1.500 14.500h3v3h-3zM15.500 1.500h3v3h-3zM4 14L16 4" /><path d="M15.500 7.500h8v11h-8z" fill="#fff" /><path d="M17 9.500h5M17 12.500h1.500M19 12.500h1.500M21 12.500h1.500M17 14.500h1.500M19 14.500h1.500M21 14.500h1.500M17 16.500h1.500M19 16.500h1.500M21 16.500h1.500" /></svg>
        </button>
        <button aria-label="Rectangle" className={`w-[30px] ${toolBtn}`}>
          <svg width="20" height="17" fill="none" stroke="#000" shapeRendering="crispEdges"><path d="M.5.5h19v16H.5z" /></svg>
        </button>
        <button aria-label="Line" className={`w-[30px] ${toolBtn}`}>
          <svg width="24" height="2"><path d="M0 1h24" stroke="#000" /></svg>
        </button>
        <button className={`w-[30px] ${toolBtn}`}>DVP</button>
        <button className={`w-[27px] ${toolBtn}`}>RR</button>
      </div>
      <div className="ml-[3px] flex gap-[4px]">
        <button className={`w-[28px] ${toolBtn}`}>Rpl</button>
        <button className={`w-[31px] ${toolBtn}`}>TOP</button>
      </div>
      <div className="ml-[3px] flex">
        <button className={`w-[26px] ${toolBtn}`}>1M</button>
        <button className={`w-[25px] ${toolBtn}`}>2m</button>
        <button className={`w-[25px] ${toolBtn}`}>5M</button>
        <button className={`w-[30px] ${toolBtn}`}>15M</button>
        <button className={`w-[30px] ${toolBtn}`}>30M</button>
        <button className={`w-[24px] ${toolBtn}`}>1H</button>
        <button className={`w-[24px] ${toolBtn}`}>4H</button>
        <button className={`w-[27px] ${toolBtn}`}>Dly</button>
        <button className={`w-[26px] ${toolBtn}`}>We</button>
        <button className={`w-[33px] ${toolBtn}`}>Mon</button>
      </div>
      <div className="ml-[4px] flex">
        <button disabled className={`w-[32px] text-[#a0a0a0] ${toolBtn}`}>TC 1</button>
        <button disabled className={`w-[32px] text-[#a0a0a0] ${toolBtn}`}>TC 2</button>
        <button disabled className={`w-[31px] text-[#a0a0a0] ${toolBtn}`}>TC 3</button>
        <button className={`w-[30px] ${toolBtn}`}>RIC</button>
      </div>
      <Recorder />
    </div>
  );
}

function Recorder() {
  return (
    <div className="mt-[4px] mr-[136px] ml-auto flex h-[22px] w-[350px] items-center border border-black bg-[#1c1c1c] bg-[repeating-linear-gradient(135deg,#0000_0_2px,#ffffff22_2px_3px),linear-gradient(#4a4a4a,#0c0c0c)] pr-[6px] pl-[6px] font-['Roboto',sans-serif] text-[12px] text-white">
      <div className="flex items-center gap-[9px]">
        <button aria-label="Menu"><svg width="10" height="6"><path d="M0 0h10L5 5z" fill="#fff" /></svg></button>
        <button aria-label="Windows"><svg width="11" height="11" fill="none" stroke="#fff"><path d="M3.500.5h7v7h-7zM.5 3.500h7v7h-7z" /></svg></button>
        <button aria-label="Zoom"><svg width="13" height="13" fill="none" stroke="#fff"><circle cx="5" cy="5" r="4.500" /><path d="M8 8l4 4" strokeWidth="2" /></svg></button>
        <button aria-label="Region"><svg width="13" height="11" fill="none" stroke="#fff"><path d="M.5 10V.5H10" /><path d="M12.500 1v9.500H1" strokeDasharray="1 1" /></svg></button>
      </div>
      <span className="ml-[47px]">Celá obrazovka</span>
      <div className="ml-auto flex items-center">
        <span className="h-[10px] w-[10px] rounded-full bg-[#c80000]" />
        <button className="ml-[3px] font-['Liberation_Sans',sans-serif] text-[12px]">REC</button>
        <button aria-label="Snapshot" className="ml-[5px] flex h-[18px] w-5 items-center justify-center border border-white">
          <svg width="14" height="11"><path d="M0 2h3l1-2h6l1 2h3v9H0z" fill="#ff8c1a" /><circle cx="7" cy="6" r="2.500" fill="none" stroke="#222" strokeWidth="1.500" /></svg>
        </button>
        <button aria-label="Close recorder" className="ml-[10px]"><svg width="9" height="9" stroke="#fff"><path d="M.5.5l8 8M8.500.5l-8 8" /></svg></button>
      </div>
    </div>
  );
}

function AxisLabel({ children }: { children: React.ReactNode }) {
  return (
    <div className="flex h-[18px] items-center gap-[2px]">
      <span className="h-px w-[2px] bg-white" />
      {children}
    </div>
  );
}

export default function App() {
  return (
    <div className="relative flex h-screen w-full flex-col overflow-hidden bg-[#f0f0f0] font-['Open_Sans','Noto_Sans',sans-serif] text-[11px] leading-[14px]">
      <TitleBar />
      <MenuBar />
      <Toolbar />
      <main className="flex min-h-0 flex-1 flex-col border-t-2 border-l-2 border-t-[#7c8078] border-l-[#8a8a8a] pr-[2px] text-white">
        <div className="flex min-h-0 flex-1 border-l border-white bg-[#343d66]">
          <div className="flex min-w-0 flex-1 flex-col">
            <div className="relative flex-1">
              <Plot />
              <div className="absolute top-[1px] left-[2px] font-['Roboto',sans-serif] text-[12px] leading-[15px] whitespace-pre">
                <div className="flex">
                  <span className="bg-[#0080c0] px-[1px] pr-[3px]">{"[Sim]  Trade: 1@4939.75"}</span>
                  <span className="ml-[3px]">{"NQ-201703-GLOBEX [CB] [M]  2 Min   #1 0 DV: 11386"}</span>
                </div>
                <span className="inline-block bg-[#0080c0] px-[1px]">DPL: 0T</span>
              </div>
            </div>
            <div className="flex h-5 overflow-hidden border-t border-white">
              <div className="-ml-[10px] flex">
                {TIMES_A.map((t) => (
                  <div key={t} className="flex w-[30px] flex-col items-center gap-[1px]"><span className="h-[3px] w-px bg-white" />{t}</div>
                ))}
              </div>
              {TIMES_B.map((t) => (
                <div key={t} className="flex w-10 shrink-0 flex-col items-center gap-[1px]"><span className="h-[3px] w-px bg-white" />{t}</div>
              ))}
            </div>
          </div>
          <div className="relative flex w-[50px] flex-col">
            <div className="flex flex-1 flex-col border-l border-white pt-[13px]">
              <div className="flex h-[860px] flex-col justify-between">
                {PRICES.map((p) => (
                  <AxisLabel key={p}>{p}</AxisLabel>
                ))}
              </div>
              <div className="mt-[35px] flex h-[157px] flex-col justify-between">
                {[6000, 5000, 4000, 3000, 2000, 1000].map((v) => (
                  <AxisLabel key={v}>{v}</AxisLabel>
                ))}
              </div>
            </div>
            <span className="absolute top-[408px] left-[4px] w-[41px] bg-white px-[1px] text-[#343d66]">4928.50</span>
            <div className="flex h-5 items-center justify-end pt-[2px] pr-[2px]">
              <span className="w-[30px] bg-red-600 text-center">4 L E</span>
            </div>
          </div>
        </div>
        <div className="flex h-[17px] items-center justify-between bg-[#f0f0f0] pr-[4px] pl-[6px]">
          <svg width="5" height="8" fill="none" stroke="#505050" strokeWidth="2"><path d="M5 0L1 4l4 4" /></svg>
          <span className="mr-[54px] ml-auto h-full w-[17px] bg-[#cdcdcd]" />
          <svg width="5" height="8" fill="none" stroke="#505050" strokeWidth="2"><path d="M0 0l4 4-4 4" /></svg>
        </div>
      </main>
      <div className="h-[2px] bg-[#1e1e1e]" />
      <SettingsDialog />
    </div>
  );
}
